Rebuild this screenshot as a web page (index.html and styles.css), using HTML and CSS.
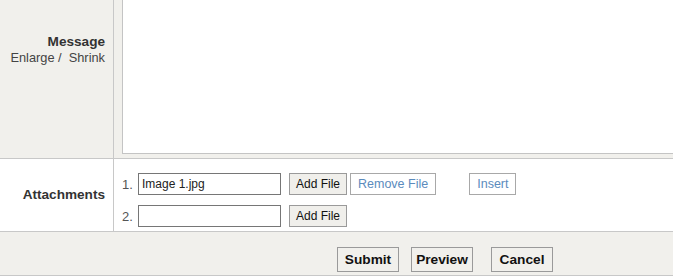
FILE: index.html
```html
<!DOCTYPE html>
<html lang="en">
<head>
  <meta charset="UTF-8">
  <meta name="viewport" content="width=device-width, initial-scale=1.0">
  <title>Post Reply</title>
  <link rel="stylesheet" href="styles.css">
</head>
<body>

<form id="postForm" onsubmit="return false">
  <div class="row row-message">
    <div class="label-cell">
      <strong>Message</strong>
      <span class="resize-links">Enlarge /&nbsp; Shrink</span>
    </div>
    <div class="value-cell">
      <textarea id="message"></textarea>
    </div>
  </div>

  <div class="row row-attach">
    <div class="label-cell">
      <strong>Attachments</strong>
    </div>
    <div class="value-cell files">
      <div class="file-line">
        <span class="num">1.</span>
        <input type="text" value="Image 1.jpg">
        <button type="button" class="btn-small">Add File</button>
        <button type="button" class="btn-link">Remove File</button>
        <button type="button" class="btn-link btn-insert">Insert</button>
      </div>
      <div class="file-line">
        <span class="num">2.</span>
        <input type="text">
        <button type="button" class="btn-small">Add File</button>
      </div>
    </div>
  </div>

  <div class="actions">
    <button type="submit" class="btn-main">Submit</button>
    <button type="button" class="btn-main">Preview</button>
    <button type="button" class="btn-main btn-cancel">Cancel</button>
  </div>
</form>

</body>
</html>
```

FILE: styles.css
```css
body {
  font-family: "Liberation Sans", Arial, sans-serif;
  margin: 0;
  padding: 0;
  color: #333;
  background-color: #fff;
  overflow: hidden;
}

#postForm {
  margin-top: -10px;
}

.row {
  display: flex;
  border-bottom: 1px solid #c8c8c8;
}

.label-cell {
  box-sizing: border-box;
  width: 114px;
  flex-shrink: 0;
  padding-right: 8px;
  border-right: 1px solid #c8c8c8;
  text-align: right;
  font-size: 13.6px;
  line-height: 16px;
}

.value-cell {
  flex: 1;
  padding-left: 8px;
}

/* message row */
.row-message .label-cell,
.row-message .value-cell {
  background-color: #f1f0ec;
}

.row-message .label-cell {
  padding-top: 44px;
}

.row-message strong {
  display: block;
}

.resize-links {
  display: block;
  font-size: 12.8px;
  color: #444;
}

.row-message .value-cell {
  padding-bottom: 4px;
}

/* the textarea runs on past the right edge of the window */
#message {
  display: block;
  box-sizing: border-box;
  width: 100%;
  height: 164px;
  margin: 0;
  border: 1px solid #c4c4c4;
  border-right: none;
  resize: none;
}

/* attachments row */
.row-attach .label-cell {
  display: flex;
  align-items: center;
  justify-content: flex-end;
}

.files {
  display: flex;
  flex-direction: column;
  gap: 10px;
  padding-top: 14px;
  padding-bottom: 4px;
}

.file-line {
  display: flex;
  align-items: center;
  height: 22px;
}

.num {
  width: 16px;
  font-size: 13px;
  color: #555;
}

.file-line input {
  box-sizing: border-box;
  width: 143px;
  height: 22px;
  margin: 0 8px 0 0;
  padding: 0 3px;
  border: 1px solid #767676;
  font-family: "Liberation Sans", Arial, sans-serif;
  font-size: 12px;
  color: #222;
}

.btn-small,
.btn-link {
  box-sizing: border-box;
  height: 22px;
  margin: 0;
  font-family: "Liberation Sans", Arial, sans-serif;
  cursor: pointer;
}

.btn-small {
  padding: 0 6px;
  background-color: #f0efeb;
  border: 1px solid #9a9a9a;
  font-size: 12px;
  color: #111;
}

.btn-link {
  margin-left: 3px;
  padding: 0 7px;
  background-color: #fff;
  border: 1px solid #a8a8a8;
  font-size: 12.5px;
  color: #5b8bbd;
}

.btn-insert {
  margin-left: 33px;
}

/* footer buttons */
.actions {
  display: flex;
  gap: 12px;
  padding: 15px 0 3px 337px;
  background-color: #f1f0ec;
  border-bottom: 1px solid #c8c8c8;
}

.btn-main {
  box-sizing: border-box;
  min-width: 62px;
  height: 25px;
  padding: 0 4px;
  background-color: #f1f0ec;
  border: 1px solid #9a9a9a;
  font-family: "Liberation Sans", Arial, sans-serif;
  font-size: 13.7px;
  font-weight: bold;
  color: #111;
  cursor: pointer;
}

.btn-cancel {
  margin-left: 6px;
}
```
